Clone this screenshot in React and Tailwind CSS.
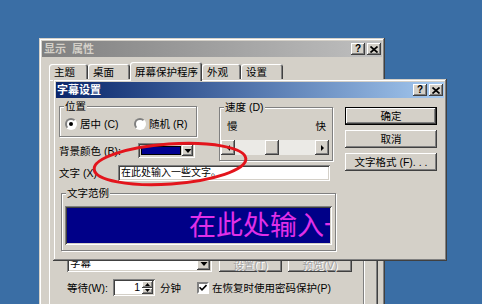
const RAISED =
  'bg-[#d4d0c8] shadow-[inset_-1px_-1px_#404040,inset_1px_1px_#ffffff,inset_-2px_-2px_#808080,inset_2px_2px_#d4d0c8]'
const WINDOW =
  'bg-[#d4d0c8] shadow-[inset_-1px_-1px_#404040,inset_1px_1px_#d4d0c8,inset_-2px_-2px_#808080,inset_2px_2px_#ffffff]'
const SUNKEN =
  'shadow-[inset_1px_1px_#808080,inset_-1px_-1px_#ffffff,inset_2px_2px_#404040,inset_-2px_-2px_#d4d0c8]'
const GROUP = 'relative border border-[#808080] shadow-[inset_1px_1px_#ffffff,1px_1px_#ffffff]'

function TitleButtons() {
  return (
    <div className="flex gap-[2px]">
      <span
        className={`flex h-[12px] w-[14px] items-center justify-center font-['Liberation_Sans',sans-serif] text-[10px] font-bold leading-none text-black ${RAISED}`}
      >
        ?
      </span>
      <span className={`flex h-[12px] w-[14px] items-center justify-center ${RAISED}`}>
        <svg width="8" height="7" viewBox="0 0 8 7" aria-hidden="true">
          <path d="M0.5 0.5 L7.5 6.5 M7.5 0.5 L0.5 6.5" stroke="#000" strokeWidth="1.7" />
        </svg>
      </span>
    </div>
  )
}

function GroupLabel({ children }) {
  return (
    <span className="absolute -top-[8px] left-[4px] whitespace-nowrap bg-[#d4d0c8] px-[1px] leading-[14px]">
      {children}
    </span>
  )
}

function Radio({ checked }) {
  return (
    <span className="flex h-[12px] w-[12px] shrink-0 items-center justify-center rounded-full border-2 border-t-[#808080] border-l-[#808080] border-r-[#ffffff] border-b-[#ffffff] bg-white">
      {checked ? <span className="h-[4px] w-[4px] rounded-full bg-black" /> : null}
    </span>
  )
}

function Arrow({ dir }) {
  const paths = {
    left: 'M5 1 L2 4 L5 7 Z',
    right: 'M2 1 L5 4 L2 7 Z',
    down: 'M0.5 2 L7.5 2 L4 6 Z',
  }
  return (
    <svg width={dir === 'down' ? 8 : 7} height="8" viewBox={dir === 'down' ? '0 0 8 8' : '0 0 7 8'} aria-hidden="true">
      <path d={paths[dir]} fill="#000" />
    </svg>
  )
}

function Button({ children, isDefault = false, disabled = false, className = '' }) {
  const label = (
    <span
      className={`whitespace-nowrap ${disabled ? 'text-[#a0a0a0] [text-shadow:1px_1px_#ffffff]' : 'text-black'}`}
    >
      {children}
    </span>
  )
  if (isDefault) {
    return (
      <div className={`border border-black ${className}`}>
        <div className={`flex h-full w-full items-center justify-center ${RAISED}`}>{label}</div>
      </div>
    )
  }
  return <div className={`flex items-center justify-center ${RAISED} ${className}`}>{label}</div>
}

function Tab({ children, selected = false, className = '' }) {
  return (
    <div
      className={`flex items-center whitespace-nowrap rounded-t-[3px] bg-[#d4d0c8] pl-[5px] shadow-[inset_1px_1px_#ffffff,inset_-1px_0_#404040,inset_-2px_0_#808080] ${
        selected ? 'relative z-10 -mb-[1px] h-[19px]' : 'h-[16px]'
      } ${className}`}
    >
      {children}
    </div>
  )
}

function ScreenSaverTab() {
  return (
    <div className={`absolute left-[39px] top-[38px] h-[280px] w-[346px] p-[3px] ${WINDOW}`}>
      <div className="flex h-[16px] items-center justify-between bg-gradient-to-r from-[#808080] to-[#c0c0c0] pl-[2px] pr-[1px]">
        <span className="text-[11px] font-bold text-[#d4d0c8]">显示&nbsp;&nbsp;属性</span>
        <TitleButtons />
      </div>

      <div className="ml-[7px] mt-[5px] flex h-[18px] items-end">
        <Tab className="w-[39px]">主题</Tab>
        <Tab className="w-[42px]">桌面</Tab>
        <Tab selected className="w-[72px]">
          屏幕保护程序
        </Tab>
        <Tab className="w-[39px]">外观</Tab>
        <Tab className="w-[42px]">设置</Tab>
      </div>

      <div className="ml-[7px] h-[240px] w-[329px] pt-[175px] shadow-[inset_1px_1px_#ffffff,inset_-1px_-1px_#404040,inset_-2px_-2px_#808080]">
        <div className="ml-[8px] h-[65px] w-[307px] border-r border-[#808080] pl-[10px] shadow-[1px_0_#ffffff]">
          <div className="flex items-end gap-[7px]">
            <div className={`flex h-[17px] w-[145px] items-center justify-between bg-white p-[2px] ${SUNKEN}`}>
              <span className="pl-[1px] leading-[13px]">字幕</span>
              <span className={`flex h-[13px] w-[13px] items-center justify-center ${RAISED}`}>
                <Arrow dir="down" />
              </span>
            </div>
            <Button disabled className="h-[15px] w-[63px]">
              设置(T)
            </Button>
            <Button disabled className="ml-[-1px] h-[15px] w-[64px]">
              预览(V)
            </Button>
          </div>

          <div className="mt-[7px] flex h-[17px] items-center whitespace-nowrap">
            <span className="w-[46px] shrink-0">等待(W):</span>
            <div className={`flex h-[17px] w-[42px] shrink-0 items-center bg-white p-[2px] ${SUNKEN}`}>
              <span className="flex-1 pr-[2px] text-right leading-[13px]">1</span>
              <span className="flex h-[13px] w-[11px] flex-col">
                <span className={`flex flex-1 items-center justify-center ${RAISED}`}>
                  <svg width="5" height="3" viewBox="0 0 5 3" aria-hidden="true">
                    <path d="M0 3 L2.5 0 L5 3 Z" fill="#000" />
                  </svg>
                </span>
                <span className={`flex flex-1 items-center justify-center ${RAISED}`}>
                  <svg width="5" height="3" viewBox="0 0 5 3" aria-hidden="true">
                    <path d="M0 0 L5 0 L2.5 3 Z" fill="#000" />
                  </svg>
                </span>
              </span>
            </div>
            <span className="w-[42px] shrink-0 pl-[5px]">分钟</span>
            <span className="flex h-[12px] w-[12px] shrink-0 items-center justify-center border-2 border-t-[#808080] border-l-[#808080] border-r-[#ffffff] border-b-[#ffffff] bg-white">
              <svg width="8" height="7" viewBox="0 0 8 7" aria-hidden="true">
                <path d="M0.5 3.2 L3 5.8 L7.5 1" stroke="#000" strokeWidth="1.6" fill="none" />
              </svg>
            </span>
            <span className="pl-[3px]">在恢复时使用密码保护(P)</span>
          </div>
        </div>
      </div>
    </div>
  )
}

function MarqueeDialog() {
  return (
    <div className={`absolute left-[53px] top-[79px] h-[182px] w-[394px] p-[3px] ${WINDOW}`}>
      <div className="flex h-[16px] items-center justify-between bg-gradient-to-r from-[#0a246a] to-[#a6caf0] pl-[1px] pr-[1px]">
        <span className="text-[11px] font-bold text-white">字幕设置</span>
        <TitleButtons />
      </div>

      <div className="flex pl-[3px] pt-[8px]">
        <div className="w-[277px] shrink-0">
          <div className="flex items-start">
            <div className="w-[138px] shrink-0">
              <div className={`h-[31px] ${GROUP}`}>
                <GroupLabel>位置</GroupLabel>
                <div className="flex items-center whitespace-nowrap pl-[5px] pt-[10px] leading-[14px]">
                  <span className="flex w-[69px] items-center gap-[3px]">
                    <Radio checked />
                    <span>居中 (C)</span>
                  </span>
                  <span className="flex items-center gap-[3px]">
                    <Radio />
                    <span>随机 (R)</span>
                  </span>
                </div>
              </div>
              <div className="mt-[6px] flex h-[15px] items-center">
                <span className="w-[79px] shrink-0 whitespace-nowrap">背景颜色 (B):</span>
                <div className={`flex h-[15px] w-[57px] shrink-0 items-stretch bg-[#d4d0c8] p-[2px] ${SUNKEN}`}>
                  <span className="m-[1px] flex-1 border border-black bg-[#000090]" />
                  <span className={`flex w-[11px] items-center justify-center ${RAISED}`}>
                    <Arrow dir="down" />
                  </span>
                </div>
              </div>
            </div>

            <div className={`ml-[22px] mt-[1px] h-[54px] w-[114px] shrink-0 ${GROUP}`}>
              <GroupLabel>速度 (D)</GroupLabel>
              <div className="flex justify-between pl-[7px] pr-[6px] pt-[11px] leading-[14px]">
                <span>慢</span>
                <span>快</span>
              </div>
              <div className="ml-[1px] mt-[7px] flex h-[15px] w-[108px] bg-[#ebeae6]">
                <span className={`flex w-[14px] items-center justify-center ${RAISED}`}>
                  <Arrow dir="left" />
                </span>
                <span className="w-[30px]" />
                <span className={`w-[14px] ${RAISED}`} />
                <span className="flex-1" />
                <span className={`flex w-[14px] items-center justify-center ${RAISED}`}>
                  <Arrow dir="right" />
                </span>
              </div>
            </div>
          </div>

          <div className="mt-[4px] grid h-[16px] grid-cols-[59px_212px] items-center">
            <span className="whitespace-nowrap">文字 (X)</span>
            <div className={`flex h-[16px] items-center justify-start bg-white pl-[3px] ${SUNKEN}`}>
              <span className="whitespace-nowrap text-[10px] leading-[14px] text-black">在此处输入一些文字。</span>
            </div>
          </div>

          <div className={`ml-[2px] mt-[12px] h-[58px] w-[275px] ${GROUP}`}>
            <GroupLabel>文字范例</GroupLabel>
            <div className={`ml-[3px] mt-[12px] h-[39px] w-[267px] p-[2px] ${SUNKEN}`}>
              <div className="h-full w-full overflow-hidden whitespace-nowrap bg-[#000088] pl-[122px] text-[27px] leading-[36px] text-[#e030e8]">
                在此处输入一些文字。
              </div>
            </div>
          </div>
        </div>

        <div className="ml-[9px] mt-[1px] flex w-[92px] shrink-0 flex-col gap-[5px]">
          <Button isDefault className="h-[18px]">
            确定
          </Button>
          <Button className="h-[18px]">取消</Button>
          <Button className="h-[18px]">文字格式 (F). . .</Button>
        </div>
      </div>
    </div>
  )
}

export default function App() {
  return (
    <div className="relative h-[304px] w-[482px] overflow-hidden bg-[#3a6ea5] font-['Liberation_Sans','Noto_Sans_CJK_SC',sans-serif] text-[10.5px] leading-[14px] text-black">
      <ScreenSaverTab />
      <MarqueeDialog />
      <svg className="pointer-events-none absolute left-0 top-0" width="482" height="304" aria-hidden="true">
        <ellipse
          cx="170"
          cy="164"
          rx="76"
          ry="20"
          transform="rotate(-4 170 164)"
          fill="none"
          stroke="#e3141c"
          strokeWidth="3"
        />
      </svg>
    </div>
  )
}
